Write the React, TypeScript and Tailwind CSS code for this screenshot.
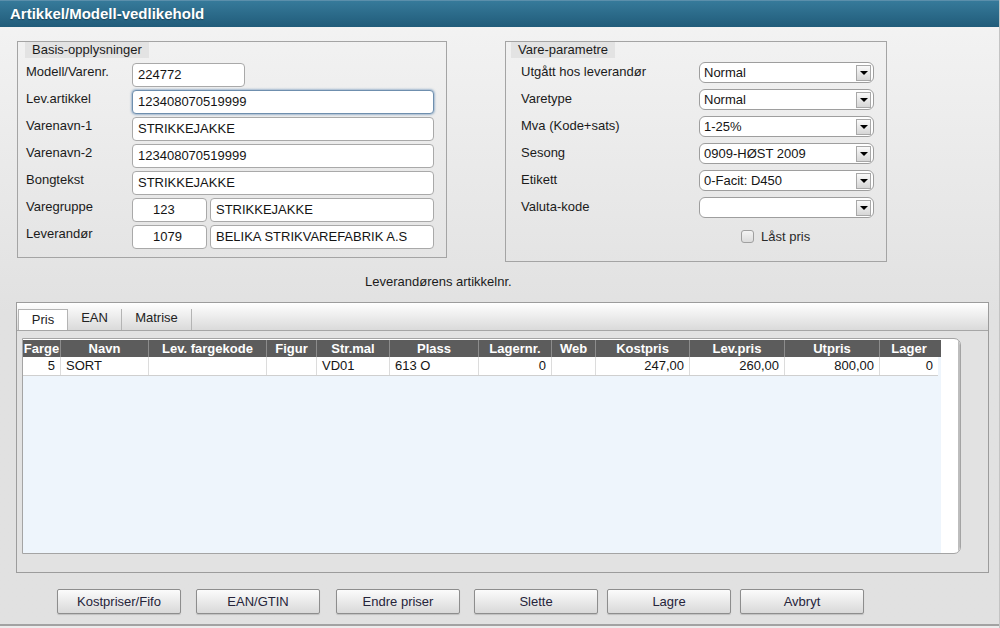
import clsx from "clsx";

const font = "font-['Liberation_Sans',Arial,sans-serif]";

function Field({
	value,
	w,
	focus,
	center,
}: {
	value: string;
	w: string;
	focus?: boolean;
	center?: boolean;
}) {
	return (
		<div
			className={clsx(
				"h-[24px] rounded-[4px] border bg-white text-[13px] leading-[22px] text-[#141414] whitespace-nowrap",
				w,
				focus
					? "border-[#6f8fae] shadow-[0_0_2px_1px_rgba(100,140,180,0.55)]"
					: "border-[#a9a9a9]",
				center ? "pl-[20px]" : "pl-[5px]"
			)}
		>
			{value}
		</div>
	);
}

function Select({ value }: { value: string }) {
	return (
		<div className="flex h-[21px] w-[175px] items-center justify-between rounded-[6px] border border-[#9e9e9e] bg-white pl-[4px] pr-[2px] text-[13px] text-[#141414]">
			<span>{value}</span>
			<span className="flex h-[16px] w-[15px] items-center justify-center border border-[#a8a8a8] bg-linear-to-b from-[#fafafa] to-[#d6d6d6]">
				<span className="h-0 w-0 border-x-[4px] border-t-[4px] border-x-transparent border-t-black" />
			</span>
		</div>
	);
}

const basis: { label: string; fields: { value: string; w: string; focus?: boolean; center?: boolean }[] }[] = [
	{ label: "Modell/Varenr.", fields: [{ value: "224772", w: "w-[113px]" }] },
	{ label: "Lev.artikkel", fields: [{ value: "123408070519999", w: "w-[302px]", focus: true }] },
	{ label: "Varenavn-1", fields: [{ value: "STRIKKEJAKKE", w: "w-[302px]" }] },
	{ label: "Varenavn-2", fields: [{ value: "123408070519999", w: "w-[302px]" }] },
	{ label: "Bongtekst", fields: [{ value: "STRIKKEJAKKE", w: "w-[302px]" }] },
	{
		label: "Varegruppe",
		fields: [
			{ value: "123", w: "w-[75px]", center: true },
			{ value: "STRIKKEJAKKE", w: "w-[224px]" },
		],
	},
	{
		label: "Leverandør",
		fields: [
			{ value: "1079", w: "w-[75px]", center: true },
			{ value: "BELIKA STRIKVAREFABRIK A.S", w: "w-[224px]" },
		],
	},
];

const params = [
	["Utgått hos leverandør", "Normal"],
	["Varetype", "Normal"],
	["Mva (Kode+sats)", "1-25%"],
	["Sesong", "0909-HØST 2009"],
	["Etikett", "0-Facit: D450"],
	["Valuta-kode", ""],
];

const columns = [
	{ name: "Farge", w: "w-[37px]" },
	{ name: "Navn", w: "w-[88px]" },
	{ name: "Lev. fargekode", w: "w-[118px]" },
	{ name: "Figur", w: "w-[50px]" },
	{ name: "Str.mal", w: "w-[73px]" },
	{ name: "Plass", w: "w-[89px]" },
	{ name: "Lagernr.", w: "w-[73px]" },
	{ name: "Web", w: "w-[44px]" },
	{ name: "Kostpris", w: "w-[94px]" },
	{ name: "Lev.pris", w: "w-[95px]" },
	{ name: "Utpris", w: "w-[95px]" },
	{ name: "Lager", w: "w-[59px]" },
];

const row: { v: string; right?: boolean }[] = [
	{ v: "5", right: true },
	{ v: "SORT" },
	{ v: "" },
	{ v: "" },
	{ v: "VD01" },
	{ v: "613 O" },
	{ v: "0", right: true },
	{ v: "" },
	{ v: "247,00", right: true },
	{ v: "260,00", right: true },
	{ v: "800,00", right: true },
	{ v: "0", right: true },
];

const buttons = [
	{ label: "Kostpriser/Fifo", ml: "ml-[57px]" },
	{ label: "EAN/GTIN", ml: "ml-[15px]" },
	{ label: "Endre priser", ml: "ml-[16px]" },
	{ label: "Slette", ml: "ml-[14px]" },
	{ label: "Lagre", ml: "ml-[9px]" },
	{ label: "Avbryt", ml: "ml-[9px]" },
];

export default function App() {
	return (
		<div
			className={clsx(
				"flex h-[628px] w-[1000px] flex-col overflow-hidden border-r border-[#c4c4c4] bg-linear-to-b from-[#f4f4f4] to-[#e1e1e1] to-50% text-[#1b1b1b]",
				font
			)}
		>
			{/* title bar */}
			<div className="flex h-[27px] shrink-0 items-center border-t border-[#5b8fab] bg-linear-to-b from-[#367a9a] to-[#215c7a] pl-[10px] text-[15px] font-bold text-white [text-shadow:0_1px_1px_rgba(0,0,0,0.35)]">
				Artikkel/Modell-vedlikehold
			</div>

			{/* fieldsets */}
			<div className="mt-[14px] flex h-[221px] shrink-0 items-start">
				<div className="ml-[17px] h-[217px] w-[430px] border border-[#a4a4a4]">
					<div className="ml-[7px] h-[16px] w-fit bg-[#e3e3e3] px-[7px] text-[13px] leading-[16px]">
						Basis-opplysninger
					</div>
					<div className="mt-[5px] flex flex-col gap-[3px] pl-[8px]">
						{basis.map((r) => (
							<div key={r.label} className="flex h-[24px] items-start">
								<div className="w-[106px] pt-[1px] text-[13px] leading-[15px]">{r.label}</div>
								<div className="flex gap-[3px]">
									{r.fields.map((f, i) => (
										<Field key={i} {...f} />
									))}
								</div>
							</div>
						))}
					</div>
				</div>

				<div className="ml-[58px] h-[221px] w-[382px] border border-[#a4a4a4]">
					<div className="ml-[5px] h-[16px] w-fit bg-[#e3e3e3] px-[7px] text-[13px] leading-[16px]">
						Vare-parametre
					</div>
					<div className="mt-[4px] flex flex-col gap-[6px] pl-[15px]">
						{params.map(([label, value]) => (
							<div key={label} className="flex h-[21px] items-center">
								<div className="w-[178px] pb-[2px] text-[13px] leading-[15px]">{label}</div>
								<Select value={value} />
							</div>
						))}
					</div>
					<div className="mt-[11px] flex items-center pl-[235px]">
						<span className="h-[13px] w-[13px] rounded-[3px] border border-[#a0a0a0] bg-linear-to-b from-[#f4f4f4] to-[#dcdcdc]" />
						<span className="ml-[7px] text-[13px] leading-[15px] text-[#2a2a2a]">Låst pris</span>
					</div>
				</div>
			</div>

			<div className="mt-[12px] h-[15px] shrink-0 pl-[365px] text-[13px] leading-[15px]">
				Leverandørens artikkelnr.
			</div>

			{/* tab panel */}
			<div className="ml-[16px] mt-[13px] flex h-[271px] w-[973px] shrink-0 flex-col border border-[#9c9c9c] bg-[#e2e2e2]">
				<div className="flex h-[28px] shrink-0 items-end border-b border-[#a6a6a6] bg-linear-to-b from-[#ffffff] to-[#dadada] pl-[1px]">
					<div className="flex h-[21px] w-[50px] items-center justify-center border-x border-t border-[#b4b4b4] bg-white text-[13px] text-[#222]">
						Pris
					</div>
					<div className="flex h-[21px] w-[54px] items-center justify-center border-r border-[#b4b4b4] pb-[3px] text-[13px] text-[#222]">
						EAN
					</div>
					<div className="flex h-[21px] w-[70px] items-center justify-center border-r border-[#b4b4b4] pb-[3px] text-[13px] text-[#222]">
						Matrise
					</div>
				</div>

				<div className="ml-[5px] mt-[7px] flex h-[216px] w-[939px] overflow-hidden rounded-r-[7px] border border-[#a4a4a4] bg-white pt-[1px]">
					<div className="flex w-[918px] flex-col bg-[#eef5fc]">
						<div className="flex h-[17px] bg-[#5c5c5c]">
							{columns.map((c, i) => (
								<div
									key={c.name}
									className={clsx(
										"flex items-center justify-center overflow-hidden whitespace-nowrap text-[13px] font-bold leading-[17px] text-white",
										c.w,
										i > 0 && "border-l border-[#8c8c8c]"
									)}
								>
									{c.name}
								</div>
							))}
						</div>
						<div className="flex h-[19px] w-[915px] border-b border-[#cfcfcf] bg-white">
							{row.map((c, i) => (
								<div
									key={i}
									className={clsx(
										"overflow-hidden whitespace-nowrap px-[5px] text-[13px] leading-[18px] text-[#141414]",
										columns[i].w,
										i > 0 && "border-l border-[#dcdcdc]",
										c.right && "text-right"
									)}
								>
									{c.v}
								</div>
							))}
						</div>
					</div>
					<div className="flex-1 border-r-2 border-[#bdbdbd]" />
				</div>
			</div>

			{/* buttons */}
			<div className="mt-[16px] flex shrink-0">
				{buttons.map((b) => (
					<button
						key={b.label}
						className={clsx(
							"h-[25px] w-[124px] rounded-[2px] border border-[#8d8d8d] bg-linear-to-b from-[#fbfbfb] to-[#d9d9d9] text-[13px] text-[#26243a] shadow-[0_1px_1px_rgba(0,0,0,0.15)]",
							b.ml
						)}
					>
						{b.label}
					</button>
				))}
			</div>

			<div className="mt-[10px] h-[2px] shrink-0 bg-[#a2a2a2]" />
			<div className="flex-1 bg-[#ececec]" />
		</div>
	);
}
